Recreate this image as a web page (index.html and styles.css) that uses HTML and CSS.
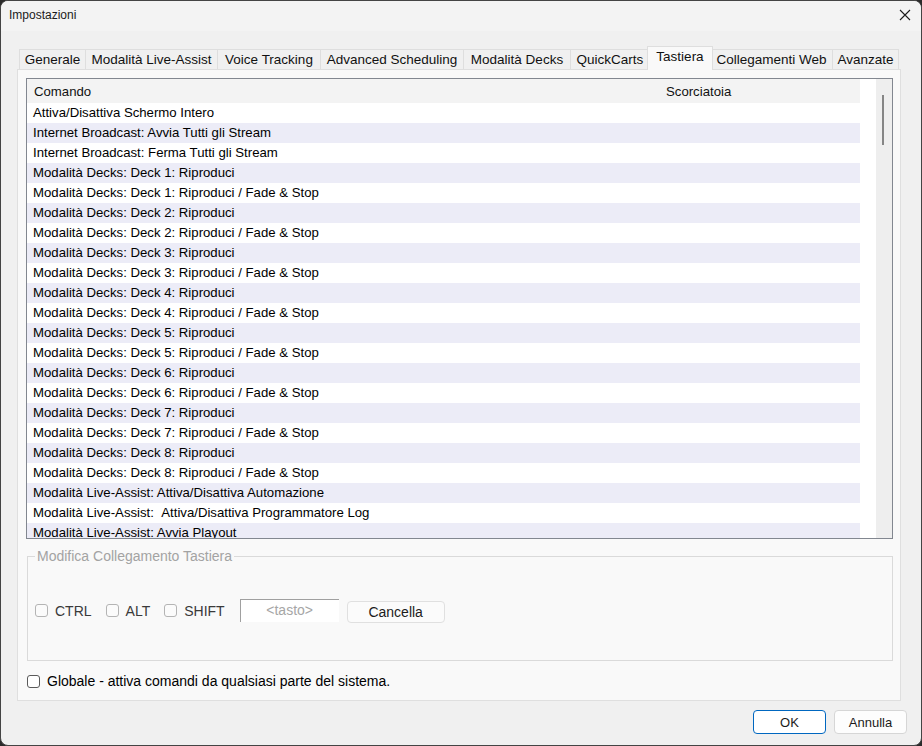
FILE: index.html
```html
<!DOCTYPE html>
<html lang="it">
<head>
<meta charset="utf-8">
<title>Impostazioni</title>
<link rel="stylesheet" href="styles.css">
</head>
<body>
<div class="window">
  <div class="titlebar">
    <span class="title">Impostazioni</span>
    <svg class="close" width="12" height="12" viewBox="0 0 12 12"><path d="M1 1 L11 11 M11 1 L1 11" stroke="#1b1b1b" stroke-width="1.1" fill="none"/></svg>
  </div>
  <div class="content">
    <div class="tabs">
      <div class="tab t1">Generale</div>
      <div class="tab t2">Modalità Live-Assist</div>
      <div class="tab t3">Voice Tracking</div>
      <div class="tab t4">Advanced Scheduling</div>
      <div class="tab t5">Modalità Decks</div>
      <div class="tab t6">QuickCarts</div>
      <div class="tab t7 selected">Tastiera</div>
      <div class="tab t8">Collegamenti Web</div>
      <div class="tab t9">Avanzate</div>
    </div>
    <div class="panel">
      <div class="list">
        <div class="list-main">
          <div class="list-head">
            <span class="col-cmd">Comando</span>
            <span class="col-key">Scorciatoia</span>
          </div>
          <div class="rows">
            <div class="row">Attiva/Disattiva Schermo Intero</div>
            <div class="row alt">Internet Broadcast: Avvia Tutti gli Stream</div>
            <div class="row">Internet Broadcast: Ferma Tutti gli Stream</div>
            <div class="row alt">Modalità Decks: Deck 1: Riproduci</div>
            <div class="row">Modalità Decks: Deck 1: Riproduci / Fade &amp; Stop</div>
            <div class="row alt">Modalità Decks: Deck 2: Riproduci</div>
            <div class="row">Modalità Decks: Deck 2: Riproduci / Fade &amp; Stop</div>
            <div class="row alt">Modalità Decks: Deck 3: Riproduci</div>
            <div class="row">Modalità Decks: Deck 3: Riproduci / Fade &amp; Stop</div>
            <div class="row alt">Modalità Decks: Deck 4: Riproduci</div>
            <div class="row">Modalità Decks: Deck 4: Riproduci / Fade &amp; Stop</div>
            <div class="row alt">Modalità Decks: Deck 5: Riproduci</div>
            <div class="row">Modalità Decks: Deck 5: Riproduci / Fade &amp; Stop</div>
            <div class="row alt">Modalità Decks: Deck 6: Riproduci</div>
            <div class="row">Modalità Decks: Deck 6: Riproduci / Fade &amp; Stop</div>
            <div class="row alt">Modalità Decks: Deck 7: Riproduci</div>
            <div class="row">Modalità Decks: Deck 7: Riproduci / Fade &amp; Stop</div>
            <div class="row alt">Modalità Decks: Deck 8: Riproduci</div>
            <div class="row">Modalità Decks: Deck 8: Riproduci / Fade &amp; Stop</div>
            <div class="row alt">Modalità Live-Assist: Attiva/Disattiva Automazione</div>
            <div class="row">Modalità Live-Assist: &nbsp;Attiva/Disattiva Programmatore Log</div>
            <div class="row alt">Modalità Live-Assist: Avvia Playout</div>
          </div>
        </div>
        <div class="list-gap"></div>
        <div class="scrollbar"><div class="thumb"></div></div>
      </div>
      <fieldset class="group">
        <legend>Modifica Collegamento Tastiera</legend>
        <div class="keyrow">
          <label class="chk dis"><input type="checkbox" disabled><span>CTRL</span></label>
          <label class="chk dis"><input type="checkbox" disabled><span>ALT</span></label>
          <label class="chk dis"><input type="checkbox" disabled><span>SHIFT</span></label>
          <div class="keybox">&lt;tasto&gt;</div>
          <button class="btn small">Cancella</button>
        </div>
      </fieldset>
      <label class="chk global"><input type="checkbox"><span>Globale - attiva comandi da qualsiasi parte del sistema.</span></label>
    </div>
    <div class="footer">
      <button class="btn primary">OK</button>
      <button class="btn">Annulla</button>
    </div>
  </div>
</div>
</body>
</html>
```
FILE: styles.css
```css
* { box-sizing: border-box; }
html, body { margin: 0; padding: 0; background: #2b2b2b; }
body {
  width: 922px;
  height: 746px;
  font-family: "Liberation Sans", Arial, sans-serif;
  font-size: 13px;
  color: #000;
}
.window {
  width: 922px;
  height: 746px;
  background: #f0f0f0;
  border: 1px solid #444;
  border-radius: 8px;
  overflow: hidden;
  display: flex;
  flex-direction: column;
}
.titlebar {
  height: 30px;
  background: #f3f3f3;
  display: flex;
  align-items: center;
  justify-content: space-between;
  padding: 0 9px 2px 8px;
  flex: none;
}
.title { font-size: 12px; color: #1b1b1b; }
.close { margin-right: 1px; }
.content {
  flex: 1;
  display: flex;
  flex-direction: column;
  padding: 15px 20px 0 16px;
}
.tabs {
  display: flex;
  align-items: flex-end;
  height: 23px;
  padding-left: 2px;
  flex: none;
}
.tab {
  height: 20px;
  border: 1px solid #dedede;
  border-bottom: none;
  margin-right: -1px;
  background: #f0f0f0;
  color: #111;
  font-size: 13.5px;
  line-height: 19px;
  text-align: center;
  white-space: nowrap;
  flex: none;
}
.t1 { width: 67px; }
.t2 { width: 133px; }
.t3 { width: 104px; }
.t4 { width: 144px; }
.t5 { width: 108px; }
.t6 { width: 80px; }
.t7 { width: 62px; }
.t8 { width: 123px; }
.t9 { width: 67px; }
.tab.selected {
  position: relative;
  z-index: 2;
  height: 24px;
  width: 66px;
  margin: 0 -3px -1px -2px;
  background: #f9f9f9;
  line-height: 20px;
}
.panel {
  flex: none;
  height: 632px;
  background: #f9f9f9;
  border: 1px solid #dfdfdf;
  padding: 8px 6px 0 8px;
  display: flex;
  flex-direction: column;
}
.list {
  height: 461px;
  width: 867px;
  border: 1px solid #828790;
  background: #fff;
  display: flex;
  overflow: hidden;
  flex: none;
  font-size: 13.2px;
}
.list-main { width: 833px; flex: none; }
.list-head {
  height: 24px;
  background: #f3f3f3;
  display: flex;
  align-items: center;
  color: #111;
}
.col-cmd { width: 632px; padding-left: 7px; }
.col-key { padding-left: 7px; }
.row {
  height: 20px;
  line-height: 19px;
  padding-left: 6px;
  white-space: pre;
  color: #000;
}
.row.alt { background: #ececf7; }
.list-gap { width: 16px; flex: none; }
.scrollbar {
  width: 16px;
  flex: none;
  background: #eeeeee;
  padding-top: 16px;
}
.thumb {
  width: 2px;
  height: 50px;
  margin-left: 6px;
  background: #858585;
}
.group {
  margin: 9px 0 0 1px;
  width: 866px;
  height: 113px;
  border: 1px solid #dadada;
  padding: 0 0 0 7px;
  font-size: 14px;
}
.group legend {
  color: #a3a3a3;
  padding: 0 2px;
  margin-left: 0;
  font-size: 14px;
}
.keyrow {
  display: flex;
  align-items: center;
  margin-top: 34px;
}
.chk {
  display: flex;
  align-items: center;
  gap: 7px;
  font-size: 14px;
}
.chk input {
  appearance: none;
  -webkit-appearance: none;
  margin: 0;
  width: 13px;
  height: 13px;
  border: 1px solid #555;
  border-radius: 3px;
  background: #fff;
  flex: none;
}
.chk.dis { margin-right: 14px; color: #3a3a3a; }
.chk.dis input { border-color: #b4b4b4; background: #fbfbfb; }
.keybox {
  width: 99px;
  height: 23px;
  margin-left: 1px;
  background: #fff;
  border-top: 1px solid #a0a0a0;
  border-left: 1px solid #a0a0a0;
  color: #a6a6a6;
  font-size: 14px;
  text-align: center;
  line-height: 20px;
}
.btn {
  font-family: "Liberation Sans", Arial, sans-serif;
  font-size: 13px;
  color: #1b1b1b;
  background: #fdfdfd;
  border: 1px solid #d6d6d6;
  border-radius: 4px;
  width: 73px;
  height: 24px;
  padding: 0;
}
.btn.small {
  width: 98px;
  height: 22px;
  margin-left: 8px;
  margin-top: 3px;
  font-size: 14px;
  background: #fbfbfb;
  border-color: #e0e0e0;
}
.btn.primary {
  border-color: #0067c0;
  background: #fff;
}
.global {
  margin-top: 12px;
  margin-left: 1px;
}
.global input { border-color: #5a5a5a; }
.footer {
  display: flex;
  justify-content: flex-end;
  gap: 8px;
  padding-top: 9px;
  margin-right: -6px;
}
```
